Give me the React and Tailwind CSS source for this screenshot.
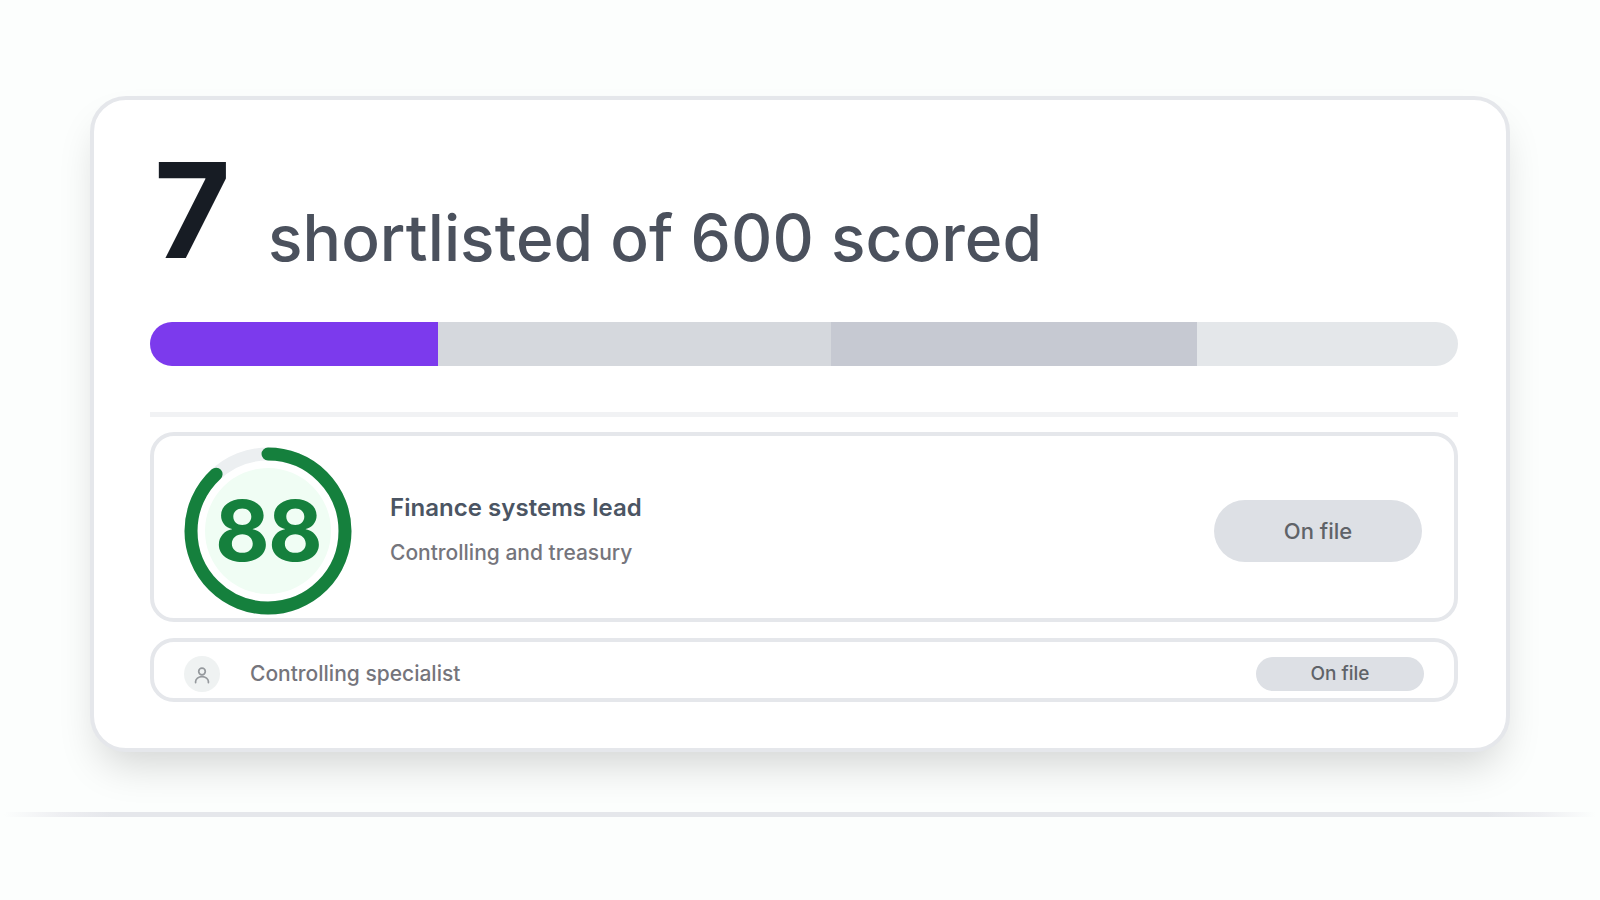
const segments = [
  { width: 288, tone: "bg-[#7c3aed]" },
  { width: 393, tone: "bg-[#d5d8dd]" },
  { width: 366, tone: "bg-[#c6c9d2]" },
  { width: 261, tone: "bg-[#e4e7ea]" },
];

function ScoreRing({ value }) {
  return (
    <div className="grid h-[168px] w-[168px] shrink-0 place-items-center">
      <svg viewBox="0 0 168 168" className="col-start-1 row-start-1 h-full w-full" fill="none">
        <circle cx="84" cy="84" r="63" fill="#f0fdf4" />
        <circle cx="84" cy="84" r="77" stroke="#eceff1" strokeWidth="13" />
        <circle
          cx="84"
          cy="84"
          r="77"
          stroke="#15803d"
          strokeWidth="13"
          strokeLinecap="round"
          pathLength="99.75"
          strokeDasharray={`${value} 100`}
          transform="rotate(-90 84 84)"
        />
      </svg>
      <span className="col-start-1 row-start-1 text-[84px] leading-none font-bold tracking-[-0.02em] text-[#15803d]">
        {value}
      </span>
    </div>
  );
}

export default function App() {
  return (
    <div className="flex h-[900px] w-[1600px] flex-col items-center bg-[#fcfefd] pt-24 font-['Inter',sans-serif]">
      <main className="flex h-[656px] w-[1420px] shrink-0 flex-col rounded-[36px] border-4 border-[#e5e7eb] bg-white px-14 pt-14 shadow-[0_22px_40px_-10px_rgba(0,0,0,0.17)]">
        <header className="flex h-[166px] items-start">
          <span className="w-[118px] pl-[4px] text-[132px] leading-[108px] font-bold text-[#171c24]">7</span>
          <span className="pt-[42px] text-[64px] leading-[80px] font-medium tracking-[0.08px] text-[#4b515d]">
            shortlisted of 600 scored
          </span>
        </header>
        <div className="flex h-11 w-[1308px] overflow-hidden rounded-full">
          {segments.map((s) => (
            <div key={s.tone} className={s.tone} style={{ width: s.width }} />
          ))}
        </div>
        <div className="mt-[46px] h-[5px] w-[1308px] bg-[#f1f2f4]" />
        <section className="mt-[15px] flex h-[190px] w-[1308px] items-center rounded-3xl border-4 border-[#e5e7eb] pt-2 pr-8 pl-[30px]">
          <ScoreRing value={88} />
          <div className="ml-[38px] flex flex-1 flex-col gap-[13px] pb-px">
            <div className="text-2xl leading-8 font-semibold tracking-[0.04px] text-[#4b5563]">Finance systems lead</div>
            <div className="text-[21px] leading-8 font-medium text-[#75757c]">Controlling and treasury</div>
          </div>
          <div className="flex h-[62px] w-[208px] items-center justify-center rounded-full bg-[#dde0e5] text-[22px] font-medium text-[#5f6368]">
            On file
          </div>
        </section>
        <section className="mt-4 flex h-16 w-[1308px] items-center rounded-3xl border-4 border-[#e5e7eb] pt-2 pr-[30px] pl-[30px]">
          <div className="flex h-9 w-9 items-center justify-center rounded-full bg-[#eff2f2] pt-[2px]">
            <svg width="20" height="20" viewBox="0 0 20 20" fill="none" stroke="#95999d" strokeWidth="1.7" strokeLinecap="round">
              <circle cx="10" cy="6.5" r="3.3" />
              <path d="M3.6 17.6v-1a6.4 5 0 0 1 12.8 0v1" />
            </svg>
          </div>
          <div className="ml-[30px] flex-1 text-[21px] font-medium text-[#75757c]">Controlling specialist</div>
          <div className="flex h-[34px] w-[168px] items-center justify-center rounded-full bg-[#dde0e5] text-[19px] font-medium text-[#5f6368]">
            On file
          </div>
        </section>
      </main>
      <div className="mt-[60px] h-[5px] w-full bg-[linear-gradient(90deg,transparent_4px,#eeeff2_60px,#e5e7eb_112px,#e5e7eb_1488px,#eeeff2_1540px,transparent_1596px)]" />
    </div>
  );
}
